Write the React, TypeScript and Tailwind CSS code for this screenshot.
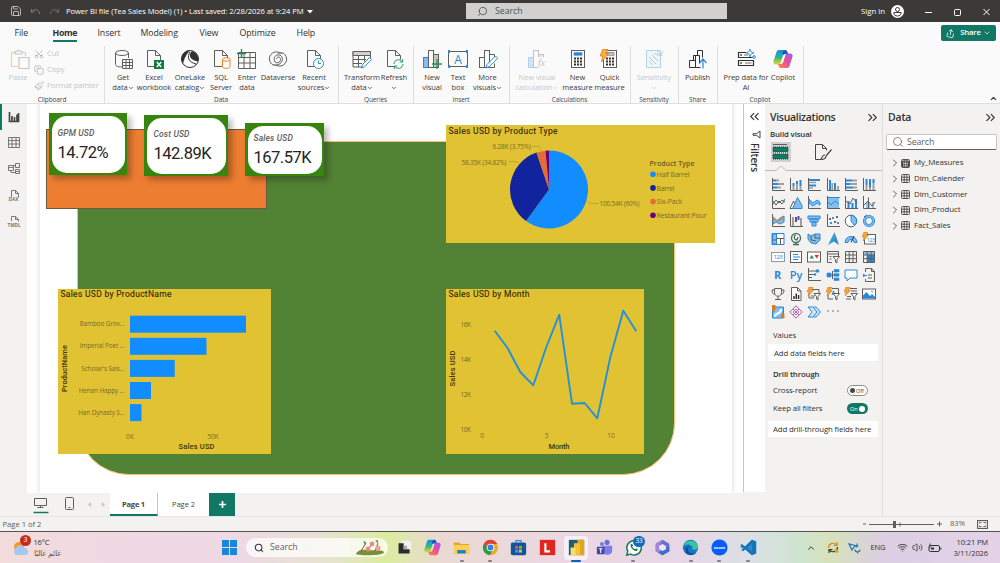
import React from "react";
import { ChevronDown, ChevronUp, ChevronRight, ChevronsLeft, ChevronsRight, Search, Undo, Redo, Save, Scissors, Copy, Paintbrush, Wifi, Volume2, Share } from "lucide-react";

type Kids = { children: React.ReactNode };

const G = "#605e5c";
const S = "#a19f9d";
const B = "#2b88d8";
const L = "#83beec";

/* ---------- ribbon icons (20x20) ---------- */

const I20 = ({ children, dim }: Kids & { dim?: boolean }) => (
  <svg width="20" height="20" viewBox="0 0 20 20" fill="none" stroke={G} strokeWidth="1" className={`shrink-0 ${dim ? "opacity-35" : ""}`}>
    {children}
  </svg>
);

const page = <path d="M3.5 1.5h8l5 5v11h-13zM11.5 1.5v5h5" fill="#fafafa" />;
const bars3 = (
  <>
    <rect x="1.5" y="8.5" width="5" height="10" fill={L} stroke={B} />
    <rect x="6.5" y="1.5" width="5" height="17" fill="#fafafa" />
    <rect x="11.5" y="5.5" width="5" height="13" fill="#c8c6c4" />
  </>
);
const calculator = (
  <>
    <rect x="3.5" y="1.5" width="13" height="17" fill="#fafafa" />
    <path d="M6 9.5h2M9 9.5h2M12 9.5h2M6 12.5h2M9 12.5h2M12 12.5h2M6 15.5h2M9 15.5h2M12 15.5h2" strokeWidth="2" stroke="#323130" />
  </>
);

const CopilotMark = ({ size }: { size: number }) => (
  <svg width={size} height={size} viewBox="0 0 20 20" className="shrink-0">
    <defs>
      <linearGradient id="cpA" x1="0" y1="0" x2="0" y2="1">
        <stop offset="0" stopColor="#1a8fe8" />
        <stop offset=".5" stopColor="#2fb58a" />
        <stop offset="1" stopColor="#e8d52a" />
      </linearGradient>
      <linearGradient id="cpB" x1="1" y1="0" x2="0" y2="1">
        <stop offset="0" stopColor="#9a5cf0" />
        <stop offset=".5" stopColor="#e8509a" />
        <stop offset="1" stopColor="#fb8a3c" />
      </linearGradient>
    </defs>
    <path d="M6 1h6c1.500 0 2 1 2.400 2.300l.5 1.700h-2.500c-1.500 0-2.200.8-2.700 2.300L7.500 14C7 15.400 6.200 15.500 5 15.500H3C.8 15.500 0 14 .6 12L3.400 3.200C3.900 1.700 4.700 1 6 1z" fill="url(#cpA)" />
    <path d="M14 19H8c-1.500 0-2-1-2.400-2.300L5.100 15h2.500c1.500 0 2.200-.8 2.700-2.300L12.500 6c.5-1.400 1.300-1.500 2.500-1.500h2c2.200 0 3 1.500 2.400 3.500l-2.800 8.800c-.5 1.500-1.300 2.200-2.600 2.200z" fill="url(#cpB)" />
    <path d="M12 1c1.500 0 2 1 2.400 2.300l.5 1.700h-2.500c-1 0-1.600.3-2.100 1L9 3z" fill="#2450c8" />
  </svg>
);

const ribbonIcons: Record<string, React.ReactNode> = {
  get: (
    <I20>
      <path d="M2.500 4v11.500c0 1.300 2.500 2.500 6 2.500h2M15.500 4v5" />
      <ellipse cx="9" cy="4" rx="6.500" ry="2.500" />
      <path d="M9.500 10.500h10v9h-10zM9.500 13.500h10M9.500 16.500h10M13 10.500v9M16.500 10.500v9" fill="#fff" />
    </I20>
  ),
  excel: (
    <I20>
      {page}
      <rect x="10" y="11" width="10" height="9" fill="#107c41" stroke="none" />
      <path d="M12.800 13l4.400 5M17.200 13l-4.400 5" stroke="#fff" strokeWidth="1.400" />
    </I20>
  ),
  onelake: (
    <I20>
      <circle cx="10" cy="10" r="8.500" fill="#fafafa" stroke="#323130" />
      <path d="M10 1.500a8.500 8.500 0 0 0-7 13.500C4 11 5 7 10 1.500zM12 2c-4 4-2.500 9 6 10.500A8.500 8.500 0 0 0 12 2z" fill="#323130" stroke="none" />
      <path d="M10 3c-3 5-2 10 6 12" stroke="#323130" />
    </I20>
  ),
  sql: (
    <I20>
      {page}
      <path d="M11.500 10.500v7c0 2.500 7.500 2.500 7.500 0v-7" fill="#fff" stroke="#e8811a" />
      <ellipse cx="15.250" cy="10.500" rx="3.750" ry="1.700" fill="#fff" stroke="#e8811a" />
    </I20>
  ),
  enter: (
    <I20>
      <path d="M1.500 3.500h17v16h-17zM1.500 8.500h17M1.500 14h17M7 3.500v16M13 3.500v16" />
      <path d="M4.500 0v9M0 4.500h9" stroke="#1f8a4c" strokeWidth="1.400" />
    </I20>
  ),
  dataverse: (
    <I20>
      <path d="M13.500 4.500C6 0 .5 6 1.500 11s5.500 6.500 8.500 4.500M6.500 15.500C14 20 19.500 14 18.500 9S13 2.500 10 4.500" />
      <path d="M10 15.500c5-1 6-8.500 1.500-9.500S5.500 9 6.500 12s6 2 6-1.500-4-3-4-.5" />
    </I20>
  ),
  recent: (
    <I20>
      {page}
      <circle cx="14.500" cy="14.500" r="5" fill="#fff" stroke="#2a8fb0" />
      <path d="M14.500 11.500v3h2.500" stroke="#2a8fb0" />
    </I20>
  ),
  transform: (
    <I20>
      <path d="M1 2.500h17.500v4H1zM1 6.500V18h9M1 10.500h13M1 14.500h9M6.500 6.500V18M12.500 6.500v6M18.500 6v3" />
      <path d="M1 2.500h17.500v4H1z" fill="#d2d0ce" />
      <path d="M9.500 19l1-3.500 7-7 2 2.200-7 7z" fill="#fff" stroke={B} />
    </I20>
  ),
  refresh: (
    <I20>
      {page}
      <circle cx="14.500" cy="15" r="5" fill="#fafafa" stroke="none" />
      <path d="M10 15c0-4.500 6-6 8.500-2M18.700 10v3h-3M19 15c0 4.500-6 6-8.500 2M10.300 20v-3h3" stroke="#1f9a50" />
    </I20>
  ),
  newVisual: (
    <I20>
      {bars3}
      <path d="M15 10v10M10 15h10" stroke="#1f9a50" strokeWidth="1.300" />
    </I20>
  ),
  textBox: (
    <I20>
      <rect x=".5" y="2.500" width="19" height="15" />
      <path d="M.5 2.500h.01M19.500 2.500h.01M.5 17.500h.01M19.500 17.500h.01" stroke={B} strokeWidth="3" strokeLinecap="square" />
      <text x="10" y="14.500" textAnchor="middle" fontSize="12" fill={B} stroke="none" fontFamily="Open Sans">A</text>
    </I20>
  ),
  more: (
    <I20>
      <rect x="1.500" y="8.500" width="5" height="10" />
      <rect x="6.500" y="1.500" width="5" height="17" />
      <path d="M11.500 5.500h5v3M11.500 18.500h5v-4" />
      <path d="M8 19l1-3.500 8.500-8.500 2.200 2.200-8.500 8.500z" fill="#fff" stroke={B} />
    </I20>
  ),
  visualCalc: (
    <I20 dim>
      {bars3}
      <rect x="10.500" y="8" width="9" height="11" fill="#fafafa" stroke="none" />
      <text x="11" y="17" fontSize="10" fontStyle="italic" fill={G} stroke="none" fontFamily="Liberation Serif">fx</text>
    </I20>
  ),
  measure: (
    <I20>
      {calculator}
      <rect x="6" y="3.700" width="8" height="2.500" fill={B} stroke={B} strokeWidth=".6" />
    </I20>
  ),
  quick: (
    <I20>
      {calculator}
      <rect x="6" y="3.700" width="8" height="2.500" fill="#c8c6c4" strokeWidth=".6" />
      <path d="M3 0h5L5.800 4.500H8.500L1.500 13l1.200-6H0z" fill="#f7b03c" stroke="#d9741a" strokeWidth=".7" />
    </I20>
  ),
  sensitivity: (
    <I20 dim>
      <path d="M2.500 1.500h14v17h-14z" fill="#dceefa" stroke="#2a8fb0" />
      <path d="M5 8l7 7M5 12l4 4M8 6l6 6M10 4.500l6 2 3-4M13 2l5 5" stroke="#2a6fa0" />
    </I20>
  ),
  publish: (
    <I20>
      <path d="M1.500 11.500h6v7h-6zM7.500 18.500v-12h-2v5M5.500 6.500h6v8M9.500 6v-4.500h5v7M7.500 18.500h5" stroke="#323130" />
      <path d="M15 19.500v-9M11.500 14l3.500-4 3.500 4" stroke={B} strokeWidth="1.200" />
    </I20>
  ),
  prep: (
    <I20>
      <path d="M10 3.500H2.500v5h15M2.500 11.500h15v5h-15z" stroke="#323130" strokeWidth="1.200" />
      <path d="M5 6h.01M5 14h.01" strokeWidth="2" strokeLinecap="round" />
      <path d="M9 14h6.500M8 6h4" stroke="#a19f9d" strokeWidth="1.600" />
      <path d="M14 0l1 2.800L18 4l-3 1-1 3-1-3-3-1 3-1.200zM18 6l.6 1.600 1.400.4-1.400.6L18 10l-.6-1.400L16 8l1.400-.4z" fill="#fff" stroke={B} strokeWidth=".8" />
    </I20>
  ),
  copilot: <CopilotMark size={20} />,
};

type Item = { icon: string; a: string; b?: string; w: string; caret?: boolean; dim?: boolean };

const groups: { name: string; cls: string; items: Item[] }[] = [
  {
    name: "Data",
    cls: "w-[234px] pl-1",
    items: [
      { icon: "get", a: "Get", b: "data", w: "w-[30px]", caret: true },
      { icon: "excel", a: "Excel", b: "workbook", w: "w-8" },
      { icon: "onelake", a: "OneLake", b: "catalog", w: "w-10", caret: true },
      { icon: "sql", a: "SQL", b: "Server", w: "w-[22px]" },
      { icon: "enter", a: "Enter", b: "data", w: "w-[30px]" },
      { icon: "dataverse", a: "Dataverse", w: "w-8" },
      { icon: "recent", a: "Recent", b: "sources", w: "w-10", caret: true },
    ],
  },
  {
    name: "Queries",
    cls: "w-[75px] pl-2",
    items: [
      { icon: "transform", a: "Transform", b: "data", w: "w-8", caret: true },
      { icon: "refresh", a: "Refresh", b: "", w: "w-8", caret: true },
    ],
  },
  {
    name: "Insert",
    cls: "w-24 pl-[7px]",
    items: [
      { icon: "newVisual", a: "New", b: "visual", w: "w-6" },
      { icon: "textBox", a: "Text", b: "box", w: "w-7" },
      { icon: "more", a: "More", b: "visuals", w: "w-[31px]", caret: true },
    ],
  },
  {
    name: "Calculations",
    cls: "w-[121px] pl-[5px]",
    items: [
      { icon: "visualCalc", a: "New visual", b: "calculation", w: "w-[46px]", caret: true, dim: true },
      { icon: "measure", a: "New", b: "measure", w: "w-[35px]" },
      { icon: "quick", a: "Quick", b: "measure", w: "w-[29px]" },
    ],
  },
  { name: "Sensitivity", cls: "w-12 pl-1", items: [{ icon: "sensitivity", a: "Sensitivity", b: "", w: "w-10", caret: true, dim: true }] },
  { name: "Share", cls: "w-[39px]", items: [{ icon: "publish", a: "Publish", w: "w-[39px]" }] },
  {
    name: "Copilot",
    cls: "w-[86px] pl-[7px]",
    items: [
      { icon: "prep", a: "Prep data for", b: "AI", w: "w-11" },
      { icon: "copilot", a: "Copilot", w: "w-[30px]" },
    ],
  },
];

const GroupLabel = ({ children }: Kids) => (
  <div className="absolute inset-x-0 -bottom-px text-center text-[6.500px] leading-[9px] tracking-[-0.1px] text-[#484644]">{children}</div>
);

function Ribbon() {
  return (
    <div className="relative flex h-[60px] border-b border-[#e1dfdd] bg-[#fafafa] text-[#3b3a39]">
      <div className="relative flex w-[104px] text-[#c8c6c4]">
        <div className="flex w-9 flex-col items-center pt-[5px]">
          <svg width="20" height="20" viewBox="0 0 20 20" fill="none" stroke="#c8c6c4" strokeWidth="1.200" className="ml-1">
            <path d="M5 3.500H1.500v14H8M12 3.500h3.500V7" stroke="#f0cfa4" />
            <path d="M5 5V2.500h2a1.500 1.500 0 0 1 3 0h2V5z" />
            <path d="M9 8.500h10v11H9z" fill="#fafafa" />
          </svg>
          <span className="mt-[3px] text-[7.500px] leading-[11px]">Paste</span>
        </div>
        <div className="-ml-0.5 flex flex-col gap-[5px] pt-1 text-[7.800px] leading-[11px] tracking-[-0.22px]">
          <span className="flex items-center gap-[3px]"><Scissors size={10} strokeWidth={1.500} className="-rotate-90 text-[#a19f9d]" />Cut</span>
          <span className="flex items-center gap-[3px]"><Copy size={10} strokeWidth={1.500} className="text-[#a19f9d]" />Copy</span>
          <span className="flex items-center gap-[3px]"><Paintbrush size={10} strokeWidth={1.500} className="text-[#b5a79a]" />Format painter</span>
        </div>
        <GroupLabel>Clipboard</GroupLabel>
      </div>
      {groups.map((g) => (
        <div key={g.name} className={`relative flex ${g.cls} before:absolute before:left-0 before:top-0.5 before:h-[57px] before:w-px before:bg-[#e1dfdd]`}>
          {g.items.map((it) => (
            <div key={it.icon} className={`flex shrink-0 flex-col items-center pt-[5px] ${it.w}`}>
              {ribbonIcons[it.icon]}
              <div className={`mt-[2.500px] flex flex-col items-center whitespace-nowrap text-[7.500px] leading-[10.500px] tracking-[-0.07px] ${it.dim ? "text-[#c8c6c4]" : ""}`}>
                <span>{it.a}</span>
                <span className="flex h-[10px] items-center">
                  {it.b}
                  {it.caret && <ChevronDown size={6} strokeWidth={3} className="mt-px" />}
                </span>
              </div>
            </div>
          ))}
          <GroupLabel>{g.name}</GroupLabel>
        </div>
      ))}
      <div className="relative before:absolute before:left-0 before:top-0.5 before:h-[57px] before:w-px before:bg-[#e1dfdd]" />
      <ChevronUp size={9} strokeWidth={3} className="absolute bottom-0 right-0.5" />
    </div>
  );
}

function TitleBar() {
  return (
    <div className="flex h-[22px] items-center bg-[#3b3a39] text-white">
      <Save size={12} strokeWidth={1.700} className="ml-[10px] text-[#d2d0ce]" />
      <Undo size={11} strokeWidth={1.800} className="ml-2 text-[#8a8886]" />
      <Redo size={11} strokeWidth={1.800} className="ml-2 text-[#797775]" />
      <div className="ml-[6px] flex w-[400px] items-center whitespace-nowrap pt-[2px] text-[7.600px] tracking-[-0.055px]">
        Power BI file (Tea Sales Model) (1) • Last saved: 2/28/2026 at 9:24 PM
        <svg width="6" height="4" viewBox="0 0 6 4" className="ml-1"><path d="M0 0h6L3 3.500z" fill="#fff" /></svg>
      </div>
      <div className="flex h-4 w-[261px] shrink-0 items-center bg-[#d2d0ce] pl-[11px] text-[8.700px] text-[#3d5a50]">
        <Search size={11} strokeWidth={1.800} className="mr-[7px] -scale-x-100" />
        <span className="pt-px">Search</span>
      </div>
      <span className="ml-[134px] w-[30px] whitespace-nowrap pt-px text-[7.800px]">Sign in</span>
      <svg width="13" height="13" viewBox="0 0 13 13" className="mr-5">
        <circle cx="6.500" cy="6.500" r="6.500" fill="#fff" />
        <circle cx="6.500" cy="4.500" r="2" fill="none" stroke="#3b3a39" />
        <path d="M2.800 7.500h7.400c0 2.500-1.700 3.500-3.700 3.500S2.800 10 2.800 7.500z" fill="none" stroke="#3b3a39" />
      </svg>
      <svg width="68" height="10" viewBox="0 0 68 10" fill="none" stroke="#fff" strokeWidth="1" className="mt-0.5 shrink-0">
        <path d="M1 5.500h7M59.500 2l6 6M65.500 2l-6 6" />
        <rect x="30.500" y="2.500" width="6" height="6" rx="1" />
      </svg>
    </div>
  );
}

const tabs = [
  { t: "File", w: "w-[38px]" },
  { t: "Home", w: "w-[45px]" },
  { t: "Insert", w: "w-[43px]" },
  { t: "Modeling", w: "w-[59px]" },
  { t: "View", w: "w-10" },
  { t: "Optimize", w: "w-[57px]" },
  { t: "Help", w: "w-10" },
];

function TabBar() {
  return (
    <div className="flex h-[22px] items-center bg-[#fafafa] pl-[14.500px] text-[8.800px] tracking-[-0.1px] text-[#323130]">
      {tabs.map((t) => (
        <div key={t.t} className={`flex ${t.w}`}>
          <span className={t.t === "Home" ? "h-[18px] border-b-2 border-[#117865] pt-[3px] font-bold leading-[13px] tracking-[-0.35px]" : "whitespace-nowrap pt-px"}>{t.t}</span>
        </div>
      ))}
      <div className="ml-auto mr-1 flex h-4 w-[55px] items-center justify-center gap-[5px] rounded-xs bg-[#117865] text-[7.800px] font-semibold tracking-[-0.2px] text-white">
        <Share size={9} strokeWidth={2} className="rotate-12" />
        Share
        <ChevronDown size={8} strokeWidth={2} className="-ml-[3px]" />
      </div>
    </div>
  );
}

/* ---------- left rail ---------- */

function Rail() {
  return (
    <div className="relative flex w-[27px] shrink-0 flex-col items-center bg-[#f3f2f1] pt-[7px]">
      <svg width="14" height="118" viewBox="0 0 14 118" fill="none" stroke="#797775" strokeWidth="1">
        <path d="M2.500 1v9.500h9V2M5 10V5M7.500 10V6M10 10V3.500" stroke="#484644" strokeWidth="1.700" />
        <path d="M1.500 26.500h11v10h-11zM1.500 29.500h11M1.500 33h11M5 26.500v10M9 26.500v10" />
        <path d="M8.500 52.500h4v4h-4zM8.500 58.500h4v4h-4zM1.500 54.500h5v5h-5zM1.500 56.500h5M8.500 60.500h4M4 59.500v2h4.500M6.500 54.500h2" />
        <path d="M4.500 86v-6.500h4l3 3v4M8.500 79.500v3h3" />
        <path d="M4.500 110v-4.500h4l3 3v2M8.500 105.500v3h3" />
        <text x="6.500" y="90" textAnchor="middle" fontSize="4.800" fontWeight="700" fill="#797775" stroke="none" fontFamily="Open Sans">DAX</text>
        <text x="7" y="116" textAnchor="middle" fontSize="4.600" fontWeight="700" fill="#797775" stroke="none" fontFamily="Open Sans">TMDL</text>
      </svg>
      <div className="absolute left-0 top-0 h-[26px] w-[1.500px] bg-[#117865]" />
    </div>
  );
}

/* ---------- report visuals ---------- */

const kpis = [
  { label: "GPM USD", value: "14.72%", box: "left-[22px] top-[9px] w-[78px] h-[62px] pl-[6px] pt-[11px]" },
  { label: "Cost USD", value: "142.89K", box: "left-[117px] top-[11px] w-[84px] h-[61px] pl-[7px] pt-[10px]" },
  { label: "Sales USD", value: "167.57K", box: "left-[218px] top-[19px] w-[79px] h-[53px] pl-[6px] pt-[6px]" },
];

const products = [
  { name: "Bamboo Grov...", w: 116 },
  { name: "Imperial Poet ...", w: 76.5 },
  { name: "Scholar's Sais...", w: 44.7 },
  { name: "Henan Happy ...", w: 21 },
  { name: "Han Dynasty S...", w: 11.5 },
];

function BarChart() {
  return (
    <svg width="213" height="165" viewBox="0 0 213 165" fontFamily="Open Sans" className="block bg-[#e1c233]">
      <text x="2.500" y="8" fontFamily="Roboto" fontSize="8.500" fill="#33290a" stroke="#33290a" strokeWidth=".12" textLength="111">Sales USD by ProductName</text>
      {products.map((p, i) => (
        <g key={p.name}>
          <text x="66.500" y={37.300 + i * 22.100} textAnchor="end" fontSize="6.400" letterSpacing="-.1" fill="#7a6a2a">{p.name}</text>
          <rect x="72" y={26.700 + i * 22.100} width={p.w} height="17" fill="#118dff" />
        </g>
      ))}
      <text x="72" y="149.500" textAnchor="middle" fontSize="6.500" textLength="8" fill="#7a6a2a">0K</text>
      <text x="155" y="149.500" textAnchor="middle" fontSize="6.500" textLength="11" fill="#7a6a2a">50K</text>
      <text x="138.500" y="160" textAnchor="middle" fontFamily="Roboto" fontSize="7.500" fontWeight="500" textLength="36" fill="#3f3410">Sales USD</text>
      <text transform="translate(9 79.500) rotate(-90)" textAnchor="middle" fontFamily="Roboto" fontSize="7.500" fontWeight="500" textLength="47" fill="#3f3410">ProductName</text>
    </svg>
  );
}

const slices = [
  { name: "Half Barrel", from: 0, to: 216, color: "#118dff", len: 33 },
  { name: "Barrel", from: 216, to: 341.35, color: "#12239e", len: 18 },
  { name: "Six-Pack", from: 341.35, to: 354.85, color: "#e66c37", len: 26 },
  { name: "Restaurant Pour", from: 354.85, to: 360, color: "#6b007b", len: 50 },
];

function arc(from: number, to: number) {
  const pt = (a: number) => {
    const r = (a * Math.PI) / 180;
    return `${103 + 39 * Math.sin(r)} ${64.5 - 39 * Math.cos(r)}`;
  };
  return `M103 64.5L${pt(from)}A39 39 0 ${to - from > 180 ? 1 : 0} 1 ${pt(to)}Z`;
}

function PieChart() {
  return (
    <svg width="269" height="118" viewBox="0 0 269 118" fontFamily="Open Sans" className="block bg-[#e1c233]">
      <text x="2.500" y="9" fontFamily="Roboto" fontSize="8.500" fill="#33290a" stroke="#33290a" strokeWidth=".12" textLength="109">Sales USD by Product Type</text>
      {slices.map((s, i) => (
        <g key={s.name}>
          <path d={arc(s.from, s.to)} fill={s.color} />
          <circle cx="207" cy={49.200 + i * 13.700} r="2.800" fill={s.color} />
          <text x="210.500" y={51.800 + i * 13.700} fontSize="7" fill="#7a6a2a" textLength={s.len}>{s.name}</text>
        </g>
      ))}
      <path d="M86 21.500h7l3 4M63 36.500h7l3 1.500M142 77l3 1.500h7" fill="none" stroke="#b39c35" strokeWidth=".8" />
      <text x="46.500" y="24" fontSize="6.500" fill="#7a6a2a" textLength="38.500">6.28K (3.75%)</text>
      <text x="15.500" y="39.500" fontSize="6.500" fill="#7a6a2a" textLength="45">58.35K (34.82%)</text>
      <text x="153.500" y="81" fontSize="6.500" fill="#7a6a2a" textLength="40">100.54K (60%)</text>
      <text x="203.500" y="40.500" fontSize="7" fontWeight="600" fill="#6a5a20" textLength="45">Product Type</text>
    </svg>
  );
}

const monthly = [
  [48.7, 41.7], [61.7, 59.3], [74.3, 83], [87.3, 96.3], [100, 59], [113.2, 25.7],
  [126, 114.7], [138.7, 114], [151.3, 129.3], [164.3, 68.3], [177.3, 21.7], [190.3, 42.3],
];

function LineChart() {
  return (
    <svg width="198" height="165" viewBox="0 0 198 165" fontFamily="Open Sans" className="block bg-[#e1c233]">
      <text x="2.500" y="8" fontFamily="Roboto" fontSize="8.500" fill="#33290a" stroke="#33290a" strokeWidth=".12" textLength="81">Sales USD by Month</text>
      {["16K", "14K", "12K", "10K"].map((t, i) => (
        <text key={t} x="14.500" y={38.200 + i * 35} fontSize="6.500" textLength="10.500" fill="#7a6a2a">{t}</text>
      ))}
      {["0", "5", "10"].map((t, i) => (
        <text key={t} x={36 + i * 64.500} y="149.300" textAnchor="middle" fontSize="6.500" fill="#7a6a2a">{t}</text>
      ))}
      <polyline points={monthly.map((p) => p.join(",")).join(" ")} fill="none" stroke="#2191dc" strokeWidth="1.900" strokeLinejoin="round" />
      <text x="113" y="160" textAnchor="middle" fontFamily="Roboto" fontSize="7.500" fontWeight="500" textLength="21" fill="#3f3410">Month</text>
      <text transform="translate(9 79.500) rotate(-90)" textAnchor="middle" fontFamily="Roboto" fontSize="7.500" fontWeight="500" textLength="36" fill="#3f3410">Sales USD</text>
    </svg>
  );
}

function Canvas() {
  return (
    <div className="relative h-[388.500px] overflow-hidden bg-white">
      <div className="absolute -top-2 bottom-0 left-[13px] w-[692px] shadow-[0_0_5px_1px_rgba(0,0,0,0.12)]" />
      <div className="absolute left-[50px] top-[37px] h-[334px] w-[598px] rounded-b-[52px] border-[1.500px] border-[#fbbf73] bg-[#528234]" />
      <div className="absolute left-[19px] top-[25px] h-20 w-[221px] border border-[#6a5a40] bg-[#ed7d31]" />
      {kpis.map((k) => (
        <div key={k.label} className={`absolute bg-[#37850f] shadow-[4px_4px_6px_rgba(0,0,0,0.28)] ${k.box}`}>
          <div className="absolute inset-[2.500px] rounded-[15px] bg-white" />
          <div className="relative pl-[2.500px] pt-[2.500px]">
            <div className="font-[Roboto] text-[8.500px] font-medium italic leading-[13px] tracking-[0.15px] text-[#605e5c]">{k.label}</div>
            <div className="mt-[3px] font-[Roboto] text-[16.500px] leading-5 tracking-[-0.5px] text-[#252423]">{k.value}</div>
          </div>
        </div>
      ))}
      <div className="absolute left-[419px] top-[21px]"><PieChart /></div>
      <div className="absolute left-[31px] top-[185px]"><BarChart /></div>
      <div className="absolute left-[419px] top-[185px]"><LineChart /></div>
    </div>
  );
}

function PageTabs() {
  return (
    <div className="flex h-[23.500px] bg-[#f3f2f1] text-[7.500px] text-[#484644]">
      <svg width="83" height="23" viewBox="0 0 83 23" fill="none" stroke="#605e5c">
        <path d="M7.500 5.500h12v7h-12zM13.500 12.500v2M10.500 14.500h6" />
        <path d="M6.500 19.500h15" stroke="#117865" strokeWidth="1.500" />
        <rect x="38.500" y="4.500" width="8" height="12" rx="1" />
        <path d="M41.500 14.500h2" />
        <path d="M64 9l-3 2.500 3 2.500zM75 9l3 2.500-3 2.500z" fill="#c8c6c4" stroke="none" />
      </svg>
      <div className="flex w-12 items-center justify-center border-b-2 border-r border-[#117865] border-r-[#c8c6c4] bg-white pt-[3px] font-bold tracking-[-0.2px]">Page 1</div>
      <div className="flex w-[51px] items-center justify-center bg-white pt-px">Page 2</div>
      <div className="flex w-[26px] items-center justify-center bg-[#117865]">
        <svg width="7" height="7" viewBox="0 0 7 7"><path d="M3.500 0v7M0 3.500h7" stroke="#fff" strokeWidth="1.700" /></svg>
      </div>
    </div>
  );
}

/* ---------- visual gallery icons (14x14) ---------- */

const axis = <path d="M1.500 0v12.500H14" />;
const grid = <path d="M1.500 1.500h11v11h-11zM1.500 5h11M1.500 8.700h11M5.200 1.500v11M9 1.500v11" />;
const bolt = <path d="M2 0h4L4.500 3.500h2L1 9l1-4H0z" fill="#f2a33a" stroke="#d07a1a" strokeWidth=".5" />;
const funnelSmall = <path d="M7 6.500h6.500l-2.500 3v3.500l-1.500-1V9.500z" fill="#fff" />;

const gallery: React.ReactNode[] = [
  <>{axis}<path d="M2 2.500h3M2 6h5M2 9.500h4" stroke={B} strokeWidth="2" /><path d="M5 2.500h3M7 6h6M6 9.500h4" stroke={S} strokeWidth="2" /></>,
  <>{axis}<path d="M4.500 12V8M8 12V6M11.500 12V8" stroke={S} strokeWidth="2" /><path d="M4.500 8V5M8 6V3M11.500 8V2" stroke={B} strokeWidth="2" /></>,
  <>{axis}<path d="M2 2h11M2 7.500h7" stroke={B} strokeWidth="2" /><path d="M2 4.500h7M2 10h4" stroke={S} strokeWidth="1.600" /></>,
  <>{axis}<path d="M4 12V2M9 12V5" stroke={B} strokeWidth="2" /><path d="M6.300 12V5M12 12V8" stroke={S} strokeWidth="1.800" /></>,
  <>{axis}<path d="M2 2.500h6M2 6h4M2 9.500h7" stroke={B} strokeWidth="2" /><path d="M8 2.500h5M6 6h7M9 9.500h4" stroke={S} strokeWidth="2" /></>,
  <>{axis}<path d="M4.500 12V7M8 12V9M11.500 12V5" stroke={S} strokeWidth="2" /><path d="M4.500 7V1M8 9V1M11.500 5V1" stroke={B} strokeWidth="2" /></>,
  <>{axis}<path d="M2 8l3-4 3 3 3-3 3 2" stroke="#3f7f63" /><path d="M2 5l3 4 3-4 3 3 3-5" /></>,
  <><path d="M1 12.500L4.500 5 8 12.500z" fill="#fff" /><path d="M3.500 12.500l5-11 4.500 8v3z" fill={L} stroke={B} /></>,
  <>{axis}<path d="M2 3l4 4 4-3 3 3v5H2z" fill="#d5e8f7" stroke="none" /><path d="M2 3l4 4 4-3 3 2V9l-3-2-4 3-4-3z" fill={L} stroke={B} /></>,
  <>{axis}<path d="M2 2h11v10H2z" fill={L} stroke="none" /><path d="M2 6l3 3 4-4 4 3M2 1.500h12" stroke={B} /></>,
  <>{axis}<path d="M4.500 12V5M8.500 12V7M12 12V3" stroke={B} strokeWidth="2" /><path d="M2 5l4 3 3-6 4 5" /></>,
  <>{axis}<path d="M5 12V6M7 12V8M11 12V6" stroke={L} strokeWidth="1.800" /><path d="M6.500 12V1.500M2 9l4-4 4 5 3-4" /></>,
  <>{axis}<path d="M2 4l4 3 3-3 4-2v6l-4 2-4-2-3 2z" fill={L} stroke={B} /><path d="M2 3c4 5 6 5 11 0" stroke="#d9863a" strokeWidth="1.600" /></>,
  <>{axis}<path d="M4 12V3M12 12V4" stroke={S} strokeWidth="2" /><path d="M7 3v5M9.500 2v4" stroke="#4b4fa0" strokeWidth="2" /></>,
  <><path d="M1 2h12v3H1zM3 5h8v3H3zM5 8h4v4H5z" fill={L} stroke={B} /></>,
  <>{axis}<path d="M4 5h.01M9 8h.01M11 3h.01" strokeWidth="1.800" strokeLinecap="square" /><path d="M7 4h.01M5 9h.01M12 9h.01" stroke={B} strokeWidth="1.800" strokeLinecap="square" /></>,
  <><circle cx="7" cy="7" r="5.800" fill="#fff" /><path d="M7 1.200A5.800 5.800 0 0 1 10.500 11.500L7 7z" fill={L} stroke={B} /></>,
  <><circle cx="7" cy="7" r="4.500" stroke={B} strokeWidth="3.200" /><circle cx="7" cy="7" r="4.500" stroke={L} strokeWidth="1.500" /><path d="M2 3l3-2" /></>,
  <><path d="M1 1.500h12v11H1z" fill="#fff" stroke={B} /><path d="M1.500 2h4v10h-4z" fill={L} stroke={B} /><path d="M6 6.500h7M9.500 6.500v6M1 8h5" /></>,
  <><circle cx="7" cy="6" r="4.500" fill="#fff" stroke="#4a7a66" strokeWidth="1.500" /><path d="M7 3c-3 1-2 5 1 5l1-3M4 12.500h6M7 10v2" stroke="#3f6b58" strokeWidth="1.300" /></>,
  <><path d="M1 2l3 2 4-2h5v6l-4 4-5-1-3-4z" fill={L} stroke={B} /><path d="M4 4v4l5 1M8 2v4h5" /></>,
  <><path d="M8.500 0L13 13 8 9.500z" fill={B} stroke="none" /><path d="M8.500 0L2 13l6-3.500z" fill="#2fa0c8" stroke="none" /></>,
  <><path d="M1 10.500a6 6 0 0 1 12 0h-3a3 3 0 0 0-6 0z" fill={L} stroke={B} /><path d="M7 10.500L10 4" stroke="#323130" /></>,
  <><rect x="2.500" y="2.500" width="11" height="9.500" fill="#fff" /><text x="4.500" y="9.500" fontSize="5.500" textLength="8.500" fill={B} stroke="none" fontFamily="Open Sans">123</text>{bolt}</>,
  <><rect x=".5" y="2.500" width="13" height="9" fill="#fff" stroke="#8a9ba8" /><text x="2.500" y="9.300" fontSize="6" textLength="9" fill={B} stroke="none" fontFamily="Open Sans">123</text></>,
  <><rect x="1.500" y="1.500" width="11" height="11" fill="#fff" /><path d="M4 4.500h5M4 7h7M4 9.500h5" stroke={B} strokeWidth="1.200" /></>,
  <><rect x=".5" y="2" width="13" height="10" fill="#fff" /><path d="M2.500 8.500L4.700 5 7 8.500z" fill="#1f9a50" stroke="none" /><path d="M7.500 5H12L9.700 8.500z" fill="#d1343f" stroke="none" /></>,
  <><path d="M6 12.500H1.500v-11h11V6M1.500 4h11M3.500 6.500h2M3.500 9h2" />{funnelSmall}</>,
  <>{grid}</>,
  <><path d="M5 5h7.500v7.500H5z" fill={B} stroke="none" /><path d="M1.500 1.500h11V5h-11z" fill={L} stroke="none" />{grid}</>,
  <text x="6.500" y="11" fontSize="11" fontWeight="700" textAnchor="middle" fill={B} stroke="none" fontFamily="Open Sans">R</text>,
  <text x="7" y="11" fontSize="11" fontWeight="600" textAnchor="middle" fill={B} stroke="none" fontFamily="Open Sans">Py</text>,
  <>{axis}<path d="M2 3h7M2 6.500h5M2 9.500h3" /><circle cx="10.500" cy="3" r="1.800" fill={B} stroke="none" /><circle cx="8" cy="6.500" r="1.200" fill={B} stroke="none" /></>,
  <><path d="M1 5h4v4H1zM8 1.500h5v2.500H8zM8 5.700h5v2.500H8zM8 10h5v2.500H8z" fill={B} stroke={B} strokeWidth=".6" /><path d="M5 7h3M6.500 3v8" /></>,
  <path d="M1 2h12v8H6l-3 3v-3H1z" fill="#fff" stroke={B} />,
  <><path d="M3.500 4V.5h6l3 3v10h-9V11M9.500.5v3h3M6 7h4M6 10h4" /><path d="M1 6l2 1.500L1 9M1 7.500h4" stroke={B} /></>,
  <><path d="M3.500 1.500h7v4c0 5-7 5-7 0zM3.500 3H1c0 3 1 4 3 4M10.500 3H13c0 3-1 4-3 4M7 9.500v3M4 12.500h6" /></>,
  <><path d="M2.500.5h6l3.500 3.500v9.500h-9.500zM8.500.5V4H12" fill="#fff" /><path d="M5 12V9M7.300 12V6.500M9.600 12V8" strokeWidth="1.500" stroke="#323130" /></>,
  <><path d="M2 6v5h5M5 2.500h7V6M4 9h4" />{bolt}{funnelSmall}</>,
  <><path d="M2 7v5h5M6 1.500h6.500V6" /><path d="M6 8l1.500-4L9 8" stroke={B} />{bolt}{funnelSmall}</>,
  <><path d="M2 12h5M6 1.500h7M7 4h6M3 9.500h4" />{bolt}{funnelSmall}</>,
  <><rect x=".5" y="2" width="13" height="10" fill="#fff" /><path d="M1 11V8.500L4.500 5 8 9l2-2 3 3v1.500H1z" fill={B} stroke="none" /><circle cx="10" cy="4.500" r=".8" fill={B} stroke="none" /></>,
  <><path d="M1.500 2h11v11h-11z" fill={L} stroke={B} /><path d="M4 12c0-6 6-1 6-8" stroke="#fff" strokeWidth="2" /><path d="M1 0h3.500v5L2.700 7.500 1 5zM10 9h3.500v4H10z" fill="#e07a1f" stroke="none" /></>,
  <><path d="M7 .8L13.200 7 7 13.200.8 7z" stroke="#a05aa8" /><path d="M7 4l3 3-3 3-3-3zM4 4l6 6M10 4l-6 6" stroke="#a05aa8" strokeWidth=".9" /></>,
  <><path d="M1 2h5l4 5-4 5H1l4-5zM7 2h2l4.500 5L9 12H7" fill="#cfe6f8" stroke={B} /></>,
  <path d="M2 6h.01M7 6h.01M12 6h.01" strokeWidth="1.500" strokeLinecap="round" />,
];

function Visualizations() {
  return (
    <div className="w-[117px] shrink-0 bg-[#f3f2f1] text-[7.800px] tracking-[-0.12px] text-[#323130]">
      <div className="flex h-[27px] items-center justify-between pl-[5px] pr-0.5 text-[10.500px] font-semibold tracking-[-0.3px]">
        Visualizations
        <ChevronsRight size={15} strokeWidth={1.700} />
      </div>
      <div className="h-[11px] pl-[5px] font-semibold leading-[7px]">Build visual</div>
      <svg width="117" height="29" viewBox="0 0 117 29" fill="none">
        <rect x="6" y="0" width="20" height="20" fill="#d2d0ce" />
        <path d="M8 2.500h14" stroke="#605e5c" />
        <path d="M8 5h15v5H8zM8 12h15v5H8z" fill="#117865" stroke="#323130" strokeDasharray="1 1" />
        <path d="M56 17.500h-5.500V2.500h7l4 4v2M57.500 2.500v4h4" stroke="#484644" />
        <path d="M66.500 7.500l-5.500 6.500M60 13c-2 0-3 1.500-4 4.500 3 0 5-1 5-3.500" stroke="#484644" strokeWidth="1.200" />
        <path d="M0 28.500h11l5-4.500 5 4.500h96" stroke="#bebbb8" />
      </svg>
      <div className="grid w-[113px] grid-cols-6 gap-y-[4.200px] pl-1 pt-[6.500px]">
        {gallery.map((g, i) => (
          <div key={i} className="flex justify-center">
            <svg width="14" height="14" viewBox="0 0 14 14" fill="none" stroke={G} strokeWidth="1">{g}</svg>
          </div>
        ))}
      </div>
      <div className="ml-2 mt-[11px] h-[14.500px] leading-[11px]">Values</div>
      <div className="ml-[3px] h-[17px] w-[110px] bg-white pl-1.5 leading-[18px]">Add data fields here</div>
      <div className="ml-2 mt-[7px] h-[13px] font-semibold leading-[13px]">Drill through</div>
      <div className="ml-2 mt-[3px] flex h-[13px] items-center justify-between">
        Cross-report
        <span className="mr-3.5 flex h-[11px] w-[21px] items-center gap-px rounded-full border border-[#8a8886] bg-white pl-0.5 text-[5.500px]">
          <i className="size-[5px] rounded-full bg-[#484644]" />Off
        </span>
      </div>
      <div className="ml-2 mt-[5px] flex h-[13px] items-center justify-between">
        Keep all filters
        <span className="mr-3.5 flex h-[11px] w-[21px] items-center gap-0.5 rounded-full bg-[#117865] pl-[3px] text-[5.500px] text-white">
          On<i className="size-[6px] rounded-full bg-white" />
        </span>
      </div>
      <div className="ml-[3px] mt-1.5 h-4 w-[110px] whitespace-nowrap bg-white pl-[5px] leading-4 tracking-[-0.14px]">Add drill-through fields here</div>
    </div>
  );
}

const tables = ["My_Measures", "Dim_Calender", "Dim_Customer", "Dim_Product", "Fact_Sales"];

function DataPane() {
  return (
    <div className="flex-1 border-l border-[#e1dfdd] bg-[#f3f2f1] text-[7.900px] tracking-[-0.1px] text-[#323130]">
      <div className="flex h-[27px] items-center justify-between pl-[5px] pr-0.5 text-[10.500px] font-semibold tracking-[-0.2px]">
        Data
        <ChevronsRight size={15} strokeWidth={1.700} />
      </div>
      <div className="ml-[3px] mt-[3px] flex h-4 w-[111px] items-center gap-[3px] rounded-xs border border-[#c8c6c4] border-b-[#605e5c] bg-white pl-[5px] text-[8.800px] text-[#605e5c]">
        <Search size={12} strokeWidth={1.500} />
        <span className="pt-px">Search</span>
      </div>
      <div className="pl-[6px] pt-[5.500px]">
        {tables.map((t, i) => (
          <div key={t} className="flex h-[15.600px] items-center">
            <ChevronRight size={12} strokeWidth={1.500} />
            <svg width="9" height="9" viewBox="0 0 9 9" fill="none" stroke="#484644" strokeWidth=".9" className="mr-1">
              <rect x=".5" y=".5" width="8" height="8" rx="1" />
              <path d="M.5 3.200h8M.5 5.800h8M3.200.5v8M5.900.5v8" />
              {i === 0 && <path d="M1.500 2h6v6h-6z" strokeWidth="1" />}
            </svg>
            {t}
          </div>
        ))}
      </div>
    </div>
  );
}

function StatusBar() {
  return (
    <div className="flex h-4 items-center border-b-[1.500px] border-t border-t-[#e8e6e4] border-b-[#55524f] bg-[#f3f2f1] pl-[2.500px] text-[7.600px] text-[#605e5c]">
      <span className="pt-px">Page 1 of 2</span>
      <svg width="82" height="12" viewBox="0 0 82 12" className="ml-auto" fill="none" stroke="#605e5c">
        <path d="M1 6h3M7 6.500h65M38 4.500v4M75 6h5M77.500 3.500v5" />
        <path d="M32.500 3v7" strokeWidth="3" />
      </svg>
      <span className="ml-[6px] w-[27px]">83%</span>
      <svg width="11" height="9" viewBox="0 0 11 9" fill="none" stroke="#605e5c" className="mr-3">
        <rect x=".5" y=".5" width="10" height="8" strokeWidth="1.300" />
        <path d="M2.500 3.500v-1h2M8.500 3.500v-1h-2M2.500 5.500v1h2M8.500 5.500v1h-2" strokeWidth=".9" />
      </svg>
    </div>
  );
}

/* ---------- taskbar ---------- */

const apps: { icon: React.ReactNode; run?: boolean; active?: boolean }[] = [
  { icon: <><path d="M6 2h12v11H6z" fill="#f0f0ee" /><path d="M3 5h6v7h7v5H3z" fill="#2b2b2b" /><path d="M9 8h4v4H9z" fill="#a8a8a8" /></> },
  { icon: <CopilotMark size={20} /> },
  { icon: <><path d="M1 4h6l2 2h10v11H1z" fill="#e0a52c" /><path d="M1 7h18v10H1z" fill="#fbd056" /><path d="M5 13h10v4H5z" fill="#1f7fc8" /></>, run: true },
  { icon: <><circle cx="10" cy="10" r="9" fill="#e3b22b" /><path d="M10 10L2.200 5.500A9 9 0 0 0 9 19l4-7z" fill="#2b9a4b" /><path d="M2.200 5.500A9 9 0 0 1 17.800 5.500L18 6H10L7 11z" fill="#dd4337" /><circle cx="10" cy="10" r="4.500" fill="#fff" /><circle cx="10" cy="10" r="3.500" fill="#3e7de0" /></>, run: true },
  { icon: <><rect x="1" y="4" width="18" height="15" rx="2" fill="#15539b" /><path d="M7 4V2h6v2" fill="none" stroke="#2b8ad0" strokeWidth="1.500" /><path d="M6 8h3.500v3.500H6z" fill="#ef5533" /><path d="M10.500 8H14v3.500h-3.500z" fill="#7fba2e" /><path d="M6 12.500h3.500V16H6z" fill="#2ba4e8" /><path d="M10.500 12.500H14V16h-3.500z" fill="#f9b92b" /></> },
  { icon: <><rect x="1" y="1" width="18" height="18" fill="#e0261f" /><path d="M7.500 5v9.500H13" fill="none" stroke="#fff" strokeWidth="2.500" /></> },
  { icon: <><path d="M1 1h18v18H1z" fill="#185f73" /><path d="M11 1h8v18h-8z" fill="#e4a41e" /><path d="M7 5h7v14H7z" fill="#f2c232" /><path d="M3 10h6v9H3z" fill="#f8dc68" /></>, active: true },
  { icon: <><circle cx="13" cy="4" r="3" fill="#6b6fd8" /><circle cx="7" cy="6" r="2.500" fill="#7b80e4" /><path d="M8 8h11v6c0 6-11 6-11 0z" fill="#7a7ee6" /><rect x="1" y="9" width="9" height="9" rx="1" fill="#4449a8" /><path d="M3.500 11.500h4M5.500 11.500v5" stroke="#fff" strokeWidth="1.200" /></> },
  { icon: <><path d="M2 19l1.300-4.500A8.500 8.500 0 1 1 6.500 17.700z" fill="#fff" stroke="#1e7a55" strokeWidth="1.800" /><path d="M7 6c-2 3 3 9 7 8l1-2-2-1-1 1c-2-.5-3-2-3.500-3.500l1-1L8.500 6z" fill="#1e7a55" /></>, run: true },
  { icon: <><path d="M10 1l8 4.500v9L10 19l-8-4.500v-9z" fill="#6a6fc8" /><path d="M10 1L2 5.500v9l5 2.500V7z" fill="#a384d8" /><path d="M18 8v6.500L10 19l-5-3 9-3z" fill="#3a6fd0" /><path d="M10 6l4 2.200v4L10 14l-4-2V8z" fill="#f0e4ee" /></> },
  { icon: <><circle cx="10" cy="10" r="9" fill="#1677c8" /><path d="M1.500 8C3 0 17 0 19 9c0 4-5 4-7 3 2-5-6-7-10.500-4z" fill="#38c3a0" /><path d="M7 12c0 5 6 6 10 4-4 5-13 3-13-3 0-3 3-5 6-4-2 0-3 1-3 3z" fill="#0f4fa0" /></>, run: true },
  { icon: <><circle cx="10" cy="10" r="9.500" fill="#0b5cff" /><text x="10" y="11.700" fontSize="5" fontWeight="700" textAnchor="middle" fill="#fff" fontFamily="Open Sans">zoom</text></>, run: true },
  { icon: <><path d="M14 1l5 2v14l-5 2L4 9.500 2 11 .8 10V6.500L2 6l4 3z" fill="#2a8fd8" /><path d="M19 3v14l-5 2L1 8l1.500-1.500L14 14.500V6L3.500 14.500l-2-1.500L14 1z" fill="#1573b8" /></>, run: true },
];

function Taskbar() {
  return (
    <div className="flex h-[31px] items-center bg-[linear-gradient(90deg,#f3dcdb_0%,#efd8e4_14%,#edd9e5_24%,#e6e3cf_33%,#dcec9f_38.500%,#ead9d2_44%,#ecd8e2_55%,#e6d6e6_68%,#dbe0e4_75%,#cfe3cf_80%,#d6e2ba_83%,#dccfe2_88%,#e3d2e8_100%)] text-[7.500px] text-[#323130]">
      <div className="relative ml-3 flex w-[208px] items-center">
        <svg width="19" height="19" viewBox="0 0 19 19">
          <circle cx="7" cy="9" r="5" fill="#f79a2c" />
          <path d="M4 17a4 4 0 0 1 0-7 5 5 0 0 1 9 0c4 1 4 6 1 7z" fill="#a5c8f3" />
        </svg>
        <span className="absolute -top-[2px] left-2 flex size-[11px] items-center justify-center rounded-full bg-[#c42b1c] text-[7px] text-white">3</span>
        <div className="ml-[2.500px] leading-[10.500px]">
          <div className="tracking-[-0.2px]">16°C</div>
          <div dir="rtl" className="text-[7.900px] text-[#605e5c]">غائم غالبًا</div>
        </div>
      </div>
      <svg width="17" height="17" viewBox="0 0 17 17" className="ml-px shrink-0">
        <path d="M1 1h7v7H1zM9 1h7v7H9zM1 9h7v7H1zM9 9h7v7H9z" fill="#1687dc" />
      </svg>
      <div className="ml-2 flex h-[19px] w-[142px] shrink-0 items-center rounded-full bg-white/75 pl-2 text-[8.700px] text-[#605e5c]">
        <Search size={10} strokeWidth={2.500} className="mr-1.5 text-[#323130]" />
        <span className="pt-px">Search</span>
        <svg width="30" height="17" viewBox="0 0 30 17" className="ml-auto mr-[3px]">
          <path d="M1 15c1-4 7-5 12-4s13-1 16 2c1 4-26 4-28 2z" fill="#7c8f3c" />
          <path d="M6 12L11 4M12 12l5-7M20 12l3-8" stroke="#6b5a3a" fill="none" />
          <path d="M8 2l3 1-1 3zM20 2l3-1v3z" fill="#3d9a5a" />
          <circle cx="17" cy="5" r="2.400" fill="#ec8b86" />
          <circle cx="23" cy="9" r="2.600" fill="#f0a09a" />
          <circle cx="13" cy="10" r="2.400" fill="#ec8b86" />
        </svg>
      </div>
      <div className="ml-0.5 flex">
        {apps.map((a, i) => (
          <div key={i} className={`relative flex h-[28px] w-[28.650px] items-center justify-center ${a.active ? "before:absolute before:h-6 before:w-6 before:rounded before:bg-white/60" : ""}`}>
            <svg width="17" height="17" viewBox="0 0 20 20" className="relative">{a.icon}</svg>
            {a.run && <span className="absolute bottom-0 h-[1.500px] w-1 rounded bg-[#868080]" />}
            {a.active && <span className="absolute bottom-0 h-[1.500px] w-[10px] rounded bg-[#0067c0]" />}
            {i === 8 && <span className="absolute left-[14px] top-0.5 flex h-[11px] w-3 items-center justify-center rounded-full bg-[#0f6cbd] text-[6.500px] text-white">33</span>}
          </div>
        ))}
      </div>
      <ChevronUp size={10} strokeWidth={2.300} className="ml-auto mr-[11px]" />
      <svg width="36" height="13" viewBox="0 0 36 13" fill="none" strokeWidth="1.200" className="mr-[7px]">
        <path d="M1.500 7a4.500 4.500 0 0 1 8-3M10 1v3.500H6.500" stroke="#d18a1f" />
        <path d="M10.500 6a4.500 4.500 0 0 1-8 3M2 12V8.500h3.500" stroke="#3b3a39" />
        <circle cx="9.500" cy="10" r="2" fill="#e8a020" />
        <path d="M22 3l3 6 2-3 3-1zM30 2.500v4M28 8.500c0 3 5 3 5 0M30.500 11v1.500" stroke="#2776b8" />
      </svg>
      <span className="mr-3 tracking-[-0.1px]">ENG</span>
      <Wifi size={11} strokeWidth={2} className="mr-1" />
      <Volume2 size={11} strokeWidth={1.700} className="mr-[5px]" />
      <svg width="14" height="10" viewBox="0 0 14 10" fill="none" stroke="#323130" className="mr-[11px]">
        <rect x="1" y="2.500" width="10.500" height="6" rx="1.500" />
        <path d="M12.800 4.500v2" />
        <path d="M3 4.500h3v2H3z" fill="#323130" stroke="none" />
        <path d="M2 .5v4" />
      </svg>
      <div className="mr-3 text-right leading-[11px] tracking-[-0.1px]">
        <div>10:21 PM</div>
        <div>3/11/2026</div>
      </div>
    </div>
  );
}

export default function App() {
  return (
    <div className="flex h-[563px] w-[1000px] flex-col overflow-hidden bg-[#f3f2f1] font-['Open_Sans',sans-serif]">
      <TitleBar />
      <TabBar />
      <Ribbon />
      <div className="flex h-[412px] shrink-0">
        <Rail />
        <div className="w-[716px] shrink-0">
          <Canvas />
          <PageTabs />
        </div>
        <div className="flex h-[388px] w-[22px] shrink-0 flex-col items-center border-l border-[#c8c6c4] bg-white pt-[5px] text-[#323130]">
          <ChevronsLeft size={15} strokeWidth={1.700} />
          <svg width="9" height="9" viewBox="0 0 9 9" fill="none" stroke="#484644" className="ml-[3px] mt-1.5"><path d="M8 1v7L4.500 5.300H1V3.700h3.500z" /></svg>
          <span className="mt-1 text-[10px] font-semibold leading-none tracking-[-0.1px] [writing-mode:vertical-rl]">Filters</span>
        </div>
        <Visualizations />
        <DataPane />
      </div>
      <StatusBar />
      <Taskbar />
    </div>
  );
}
